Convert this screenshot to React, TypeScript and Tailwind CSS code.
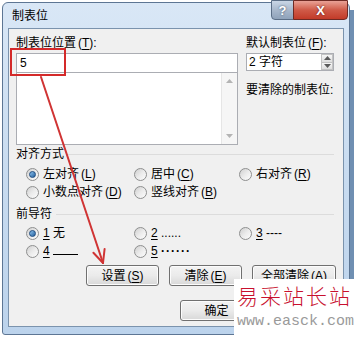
import React from "react";

function Radio({ checked }: { checked?: boolean }) {
  return (
    <span className="flex h-[13px] w-[13px] shrink-0 items-center justify-center rounded-full border border-[#8e8f8f] bg-gradient-to-br from-[#cfcfcf] via-[#ebebeb] to-[#fdfdfd]">
      {checked && (
        <span className="h-[7px] w-[7px] rounded-full border border-[#1d4b80] bg-gradient-to-br from-[#8cc3ef] to-[#24609c]" />
      )}
    </span>
  );
}

function Option({ checked, children }: { checked?: boolean; children: React.ReactNode }) {
  return (
    <div className="flex h-[18px] items-center gap-[4px]">
      <Radio checked={checked} />
      <span className="text-[12px] leading-[14px] whitespace-nowrap">{children}</span>
    </div>
  );
}

function Key({ k }: { k: string }) {
  return (
    <span className="ml-[2px]">
      (<span className="underline underline-offset-2">{k}</span>)
    </span>
  );
}

function Btn({ children, w }: { children: React.ReactNode; w: string }) {
  return (
    <div
      className={
        "flex h-[21px] items-center justify-center rounded-[3px] border border-[#707070] bg-gradient-to-b from-[#f3f3f3] via-[#ebebeb] to-[#d8d8d8] text-[12px] leading-[14px] shadow-[inset_0_0_0_1px_#fcfcfc] " +
        w
      }
    >
      {children}
    </div>
  );
}

function Arrow({ up }: { up?: boolean }) {
  return (
    <svg width="7" height="4" viewBox="0 0 7 4">
      <path d={up ? "M0 4 L3.5 0 L7 4 Z" : "M0 0 L3.5 4 L7 0 Z"} fill="#5a5a5a" />
    </svg>
  );
}

export default function App() {
  return (
    <div className="relative flex h-[339px] w-[354px] overflow-hidden bg-white font-['Liberation_Sans','Noto_Sans_CJK_SC',sans-serif] text-black">
      {/* window */}
      <div className="ml-[2px] mt-[2px] flex h-[333px] w-[348px] flex-col rounded-t-[6px] rounded-b-[3px] border border-[#5d7694] bg-gradient-to-b from-[#d9e7f6] via-[#c9dcf0] to-[#bcd3ec]">
        {/* title bar */}
        <div className="flex h-[25px] shrink-0 items-start justify-between">
          <span className="ml-[9px] mt-[5px] text-[12px] leading-[16px]">制表位</span>
          <div className="-mt-[3px] mr-[1px] flex h-[20px]">
            <div className="flex w-[23px] items-center justify-center rounded-bl-[4px] border border-[#5b6e86] bg-gradient-to-b from-[#c9d6e6] via-[#a8b8cc] to-[#8fa2ba] text-[13px] font-bold leading-none text-white [text-shadow:0_0_2px_#33455c]">
              ?
            </div>
            <div className="-ml-px flex w-[55px] items-center justify-center rounded-br-[4px] border border-[#6e2a24] bg-gradient-to-b from-[#e8a196] via-[#cf5a48] to-[#c23a28] text-[13px] font-bold leading-none text-white [text-shadow:0_0_2px_#5a1a12]">
              X
            </div>
          </div>
        </div>

        {/* client area */}
        <div className="ml-[5px] flex h-[299px] w-[336px] shrink-0 flex-col border border-[#7b93ad] bg-[#f0f0f0] px-[7px] pt-[7px]">
          <div className="flex gap-[8px]">
            <div className="flex w-[222px] flex-col">
              <div className="h-[14px] text-[12px] leading-[14px]">
                制表位位置<Key k="T" />:
              </div>
              <div className="mt-[3px] flex h-[20px] items-center border border-[#abadb3] bg-white pl-[3px] text-[12px] leading-[14px]">
                5
              </div>
              <div className="-mt-px flex h-[73px] border border-[#abadb3] bg-white">
                <div className="flex-1" />
                <div className="flex w-[16px] flex-col items-center justify-between border-l border-[#e6e6e6] bg-[#f6f6f6] py-[6px]">
                  <svg width="7" height="4" viewBox="0 0 7 4">
                    <path d="M0 4 L3.5 0 L7 4 Z" fill="#b4b4b4" />
                  </svg>
                  <svg width="7" height="4" viewBox="0 0 7 4">
                    <path d="M0 0 L3.5 4 L7 0 Z" fill="#b4b4b4" />
                  </svg>
                </div>
              </div>
            </div>
            <div className="flex w-[88px] flex-col">
              <div className="h-[14px] whitespace-nowrap text-[12px] leading-[14px]">
                默认制表位<Key k="F" />:
              </div>
              <div className="mt-[3px] flex h-[18px] items-stretch border border-[#abadb3] bg-white">
                <span className="flex flex-1 items-center pl-[2px] text-[12px] leading-[14px]">2 字符</span>
                <div className="flex w-[12px] flex-col">
                  <div className="flex flex-1 items-center justify-center border border-[#c3c3c3] bg-gradient-to-b from-[#f6f6f6] to-[#dedede]">
                    <Arrow up />
                  </div>
                  <div className="-mt-px flex flex-1 items-center justify-center border border-[#c3c3c3] bg-gradient-to-b from-[#f6f6f6] to-[#dedede]">
                    <Arrow />
                  </div>
                </div>
              </div>
              <div className="mt-[12px] h-[14px] whitespace-nowrap text-[12px] leading-[14px]">要清除的制表位:</div>
            </div>
          </div>

          {/* alignment */}
          <div className="mt-[1px] flex h-[16px] items-center gap-[4px]">
            <span className="text-[12px] leading-[14px]">对齐方式</span>
            <span className="mr-[2px] flex-1 border-t border-[#dcdcdc]" />
          </div>
          <div className="mt-[3px] grid grid-cols-[108px_105px_1fr] pl-[10px]">
            <Option checked>
              左对齐<Key k="L" />
            </Option>
            <Option>
              居中<Key k="C" />
            </Option>
            <Option>
              右对齐<Key k="R" />
            </Option>
            <Option>
              小数点对齐<Key k="D" />
            </Option>
            <Option>
              竖线对齐<Key k="B" />
            </Option>
          </div>

          {/* leader */}
          <div className="mt-[5px] flex h-[16px] items-center gap-[4px]">
            <span className="text-[12px] leading-[14px]">前导符</span>
            <span className="mr-[2px] flex-1 border-t border-[#dcdcdc]" />
          </div>
          <div className="mt-[2px] grid grid-cols-[108px_105px_1fr] pl-[10px]">
            <Option checked>
              <span className="underline underline-offset-2">1</span> 无
            </Option>
            <Option>
              <span className="underline underline-offset-2">2</span> ......
            </Option>
            <Option>
              <span className="underline underline-offset-2">3</span> ----
            </Option>
            <Option>
              <span className="underline underline-offset-2">4</span>{" "}
              <span className="inline-block w-[25px] border-b border-black align-baseline" />
            </Option>
            <Option>
              <span className="underline underline-offset-2">5</span> <span className="font-bold tracking-[1px]">······</span>
            </Option>
          </div>

          {/* buttons */}
          <div className="mt-[5px] flex justify-end gap-[10px]">
            <Btn w="w-[73px]">
              设置<Key k="S" />
            </Btn>
            <Btn w="w-[73px]">
              清除<Key k="E" />
            </Btn>
            <Btn w="w-[84px]">
              全部清除<Key k="A" />
            </Btn>
          </div>
          <div className="mt-[14px] flex justify-end pr-[83px]">
            <Btn w="w-[73px]">确定</Btn>
          </div>
        </div>
      </div>
      <div className="mt-[10px] w-[4px] bg-[#6f8fb2]" />

      {/* annotation: red box + arrow */}
      <div className="absolute left-[10px] top-[48px] h-[28px] w-[56px] border-2 border-[#d42a2a]" />
      <svg className="pointer-events-none absolute left-0 top-0" width="354" height="339" viewBox="0 0 354 339">
        <g stroke="#d03434" strokeWidth="2" strokeLinecap="round" fill="none">
          <line x1="41" y1="77" x2="103" y2="263" />
          <line x1="103" y1="263" x2="104.6" y2="249" />
          <line x1="103" y1="263" x2="93.4" y2="252.8" />
        </g>
      </svg>

      {/* watermark */}
      <div className="absolute left-[234px] top-[279px] flex h-[60px] w-[120px] flex-col bg-white pl-[3px]">
        <span className="mt-[3px] whitespace-nowrap font-['Noto_Sans_CJK_SC',serif] text-[21px] font-light leading-[26px] tracking-[2px] text-[#c8102e]">
          易采站长站
        </span>
        <span className="mt-[6px] whitespace-nowrap font-['Liberation_Mono',monospace] text-[15px] leading-[16px] text-[#9a9a9a]">
          www.easck.com
        </span>
      </div>
    </div>
  );
}
